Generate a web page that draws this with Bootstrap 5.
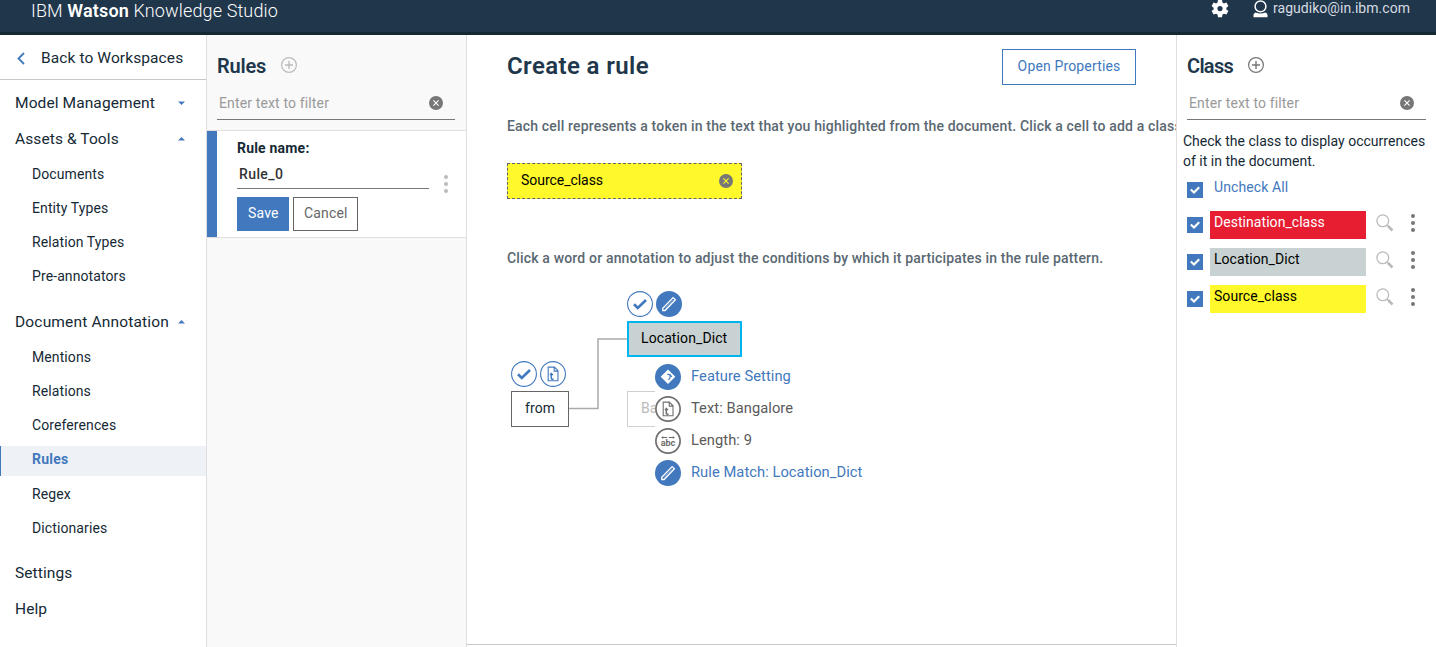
<!DOCTYPE html>
<html lang="en">
<head>
<meta charset="utf-8">
<title>IBM Watson Knowledge Studio</title>
<link href="https://cdn.jsdelivr.net/npm/bootstrap@5.3.0/dist/css/bootstrap.min.css" rel="stylesheet">
<style>
:root{--blue:#4178be;--ink:#152935;--navy:#20364b;--rule:#dfdfdf}
body{font-family:Roboto,"Liberation Sans",sans-serif;font-size:14px;line-height:20px;color:var(--ink);height:647px;overflow:hidden;letter-spacing:.1px}
svg{display:block;flex:none}
a{text-decoration:none;color:inherit}
.topbar{height:35px;background:var(--navy);border-bottom:3px solid #152935;padding:0 26px 0 31px}
.brand{font-size:18px;line-height:22px;font-weight:300;color:#fff;letter-spacing:.14px}
.brand b{font-weight:600}
.user{font-size:14px;line-height:17px;color:#d5dbe0;letter-spacing:.04px}
.shell{height:612px}
.side{width:207px;border-right:1px solid var(--rule)}
.back{height:45px;border-bottom:1px solid #c7c7c7;font-size:15.5px;padding:1px 0 0 17px;margin-bottom:5px}
.back svg{margin-top:2px}
.top-item{height:36px;font-size:15.5px;padding:0 21px 0 15px}
.group-gap{margin-bottom:11px}
.sub-item{height:34px;padding-left:32px}
.sub-item.on{height:30px;margin:4px 0 1px;background:#eef2f6;border-left:1px solid var(--blue);padding:0 0 4px 31px;color:var(--blue);font-weight:700;letter-spacing:.26px}
.rules{width:260px;background:#f9f9f9;border-right:1px solid var(--rule)}
.head{font-size:20px;line-height:24px;font-weight:600;color:var(--navy);letter-spacing:-.2px}
.head svg{margin-left:15px}
.head span{padding-top:1px;margin-bottom:-1px}
.classes .head{letter-spacing:-.7px}
.filter{border-bottom:1px solid #777;color:#999;height:33px;padding:0 12px 0 2px;margin-top:10px;letter-spacing:.14px}
.rulecard{height:108px;border-top:1px solid var(--rule);border-bottom:1px solid var(--rule);background:#fff;letter-spacing:.2px}
.bar{width:10px;background:var(--blue)}
.name-in{width:192px;border-bottom:1px solid #777;height:31px;padding:6px 0 0 2px;font-weight:500;color:#333;letter-spacing:.4px}
.sq{border-radius:0;font-size:14px;line-height:20px;letter-spacing:.15px;height:34px;padding:0 10px 2px}
.save{background:var(--blue);color:#fff;width:52px;border:1px solid var(--blue)}
.cancel{border:1px solid #666;color:#666;background:#fff;width:65px}
.main{width:709px;overflow:hidden}
.canvas-in{height:610px;border-bottom:1px solid #c7c7c7;padding-left:40px}
.open{width:134px;height:36px;border:1px solid var(--blue);color:var(--blue);background:#fff}
.title{font-size:24px;line-height:30px;font-weight:600;color:var(--navy);letter-spacing:.39px;padding-top:2px}
.hint{font-weight:500;color:#5a6872;white-space:nowrap;letter-spacing:.165px}
.token{width:235px;height:36px;background:#fff82a;border:1px dashed #666;color:#000;padding:0 8px 0 13px;letter-spacing:-.04px}
.token span{padding-bottom:2px}
.graph{height:230px;position:relative}
.graph>*{position:absolute}
.node{border:1px solid #666;height:36px;padding:0 13px 2px;display:flex;align-items:center;background:#fff;white-space:nowrap}
.node.sel{border:2px solid #00b4ef;background:#c8d2d2;color:#000}
.menu{background:#fff;width:240px;font-size:14.7px;letter-spacing:.06px}
.menu>div{height:32px;gap:10px;color:#5a5a5a}
.menu>div>span{padding-bottom:2px}
.menu>div.b{color:var(--blue)}
.classes{width:260px;border-left:1px solid var(--rule)}
.chip{width:156px;height:28px;padding:1px 4px;margin:0 10px 0 7px;color:#000;letter-spacing:.05px}
.crow{height:28px;margin-bottom:9px}
.tick{margin-top:6px}
.crow .tool{margin-top:3px}
.crow .more{color:#777;margin:3px 0 0 17px}
</style>
</head>
<body>
<svg width="0" height="0" class="position-absolute">
<defs>
<symbol id="clear" viewBox="0 0 14 14"><circle cx="7" cy="7" r="7" fill="#777"/><path d="M4.400 4.400l5.200 5.200M9.600 4.400l-5.200 5.200" stroke="var(--x,#fff)" stroke-width="1.100"/></symbol>
<symbol id="plus" viewBox="0 0 16 16"><circle cx="8" cy="8" r="7.400" fill="none" stroke="currentColor" stroke-width="1.200"/><path d="M8 4v8M4 8h8" stroke="currentColor" stroke-width="1.400"/></symbol>
<symbol id="dots" viewBox="0 0 4 18"><g fill="currentColor"><circle cx="2" cy="2" r="2"/><circle cx="2" cy="9" r="2"/><circle cx="2" cy="16" r="2"/></g></symbol>
<symbol id="check" viewBox="0 0 16 16"><path fill="#4178be" d="M0 0h16v16H0z"/><path d="M3.800 7.500l3.200 3L12.200 5.300" fill="none" stroke="#fff" stroke-width="2.200"/></symbol>
<symbol id="find" viewBox="0 0 18 18"><circle cx="6.800" cy="6.800" r="5.900" fill="none" stroke="#bbb" stroke-width="1.300"/><path d="M11 11l1.500 1.500" stroke="#bbb" stroke-width="1.300"/><path d="M12 12l4.500 4.500" stroke="#bbb" stroke-width="2.600"/></symbol>
<symbol id="ok" viewBox="0 0 26 26"><circle cx="13" cy="13" r="12.400" fill="#fff" stroke="#4178be" stroke-width="1.100"/><path d="M7 13.300l3.800 3.600 8.200-7.800" fill="none" stroke="#4178be" stroke-width="2.700"/></symbol>
<symbol id="ruler" viewBox="0 0 26 26"><circle cx="13" cy="13" r="13" fill="#4178be"/><path d="M6.800 17.300L17.100 6.600l2.300 2.200L9.100 19.500H6.800z" fill="none" stroke="#fff" stroke-width="1.300"/><path d="M9.200 17.300l7.800-8.100" stroke="#fff" stroke-width=".4"/></symbol>
<symbol id="doc" viewBox="0 0 26 26"><path d="M8.200 19.800V6.100h6.200l3.600 3.700v10z M14.200 6.300v3.800h3.600" fill="none" stroke="currentColor" stroke-width="1.100"/><path d="M11.300 11.800v5.400q0 1.300 2.300.9M9.800 13.600h3.400" fill="none" stroke="currentColor" stroke-width="1.500"/></symbol>
</defs>
</svg>

<header class="topbar d-flex justify-content-between align-items-start">
  <div class="brand">IBM <b>Watson</b> Knowledge Studio</div>
  <div class="d-flex user">
    <svg width="18" height="18" viewBox="0 0 18 18" class="me-4"><path fill="#fff" fill-rule="evenodd" d="M7 0h4l.5 2.600 1.400.8L15.400 2.500l2 3.500-2 1.700v1.700l2 1.700-2 3.500-2.500-.9-1.400.8L11 17.200H7l-.5-2.700-1.400-.8-2.500.9-2-3.500 2-1.700V7.700l-2-1.700 2-3.500 2.500.9 1.400-.8zM9 6a2.600 2.600 0 100 5.200A2.600 2.600 0 009 6z"/></svg>
    <svg width="15" height="18" viewBox="0 0 15 18" style="margin-right:5px"><circle cx="7.500" cy="6.400" r="5.400" fill="none" stroke="#fff" stroke-width="1.500"/><path fill="#fff" d="M.5 17.300v-2.200q0-1.800 2.100-2.500 4.900 2 9.800 0 2.100.7 2.100 2.500v2.200z"/></svg>
    <span>ragudiko@in.ibm.com</span>
  </div>
</header>

<div class="d-flex shell">
  <nav class="side flex-shrink-0">
    <a class="back d-flex align-items-center"><svg width="8" height="13" viewBox="0 0 8 13" class="me-3"><path d="M7 1L1.500 6.500 7 12" fill="none" stroke="#4178be" stroke-width="1.800"/></svg><span>Back to Workspaces</span></a>
    <a class="top-item d-flex align-items-center justify-content-between"><span>Model Management</span><svg width="7" height="4"><path d="M0 .5h7L3.500 4z" fill="#4178be"/></svg></a>
    <a class="top-item d-flex align-items-center justify-content-between"><span>Assets &amp; Tools</span><svg width="7" height="4"><path d="M0 3.500h7L3.500 0z" fill="#4178be"/></svg></a>
    <a class="sub-item d-flex align-items-center"><span>Documents</span></a>
    <a class="sub-item d-flex align-items-center"><span>Entity Types</span></a>
    <a class="sub-item d-flex align-items-center"><span>Relation Types</span></a>
    <a class="sub-item group-gap d-flex align-items-center"><span>Pre-annotators</span></a>
    <a class="top-item d-flex align-items-center justify-content-between"><span style="letter-spacing:.17px">Document Annotation</span><svg width="7" height="4"><path d="M0 3.500h7L3.500 0z" fill="#4178be"/></svg></a>
    <a class="sub-item d-flex align-items-center"><span>Mentions</span></a>
    <a class="sub-item d-flex align-items-center"><span>Relations</span></a>
    <a class="sub-item d-flex align-items-center"><span>Coreferences</span></a>
    <a class="sub-item on d-flex align-items-center"><span>Rules</span></a>
    <a class="sub-item d-flex align-items-center"><span>Regex</span></a>
    <a class="sub-item d-flex align-items-center" style="margin-bottom:10px"><span>Dictionaries</span></a>
    <a class="top-item d-flex align-items-center"><span>Settings</span></a>
    <a class="top-item d-flex align-items-center"><span>Help</span></a>
  </nav>

  <section class="rules flex-shrink-0">
    <div style="padding:18px 11px 10px 10px">
      <div class="d-flex align-items-center head"><span>Rules</span><svg width="16" height="16" style="color:#bbb"><use href="#plus"/></svg></div>
      <div class="filter d-flex align-items-center justify-content-between"><span>Enter text to filter</span><svg width="14" height="14"><use href="#clear"/></svg></div>
    </div>
    <div class="rulecard d-flex">
      <div class="bar"></div>
      <div style="padding:7px 0 0 20px">
        <div class="fw-bold"><span>Rule name:</span></div>
        <div class="name-in"><span>Rule_0</span></div>
        <div class="d-flex gap-1 mt-2"><button class="btn sq save">Save</button><button class="btn sq cancel">Cancel</button></div>
      </div>
      <svg width="4" height="18" class="align-self-center" style="color:#bbb;margin-left:15px"><use href="#dots"/></svg>
    </div>
  </section>

  <main class="main flex-shrink-0">
    <div class="canvas-in">
      <div class="d-flex justify-content-between" style="padding:14px 40px 0 0">
        <div class="title"><span>Create a rule</span></div>
        <button class="btn sq open">Open Properties</button>
      </div>
      <div class="hint" style="margin-top:31px">Each cell represents a token in the text that you highlighted from the document. Click a cell to add a class</div>
      <div class="token d-flex align-items-center justify-content-between" style="margin-top:27px"><span>Source_class</span><svg width="14" height="14" style="--x:#fff82a"><use href="#clear"/></svg></div>
      <div class="hint" style="margin-top:49px">Click a word or annotation to adjust the conditions by which it participates in the rule pattern.</div>
      <div class="graph">
        <svg width="60" height="72" style="left:61px;top:70px"><path d="M0 70.500h30V1h30" fill="none" stroke="#aaa" stroke-width="1.500"/></svg>
        <svg width="26" height="26" style="left:4px;top:93px"><use href="#ok"/></svg>
        <svg width="26" height="26" viewBox="0 0 26 26" style="left:33px;top:93px;color:#4178be"><circle cx="13" cy="13" r="12.400" fill="#fff" stroke="currentColor" stroke-width="1.100"/><use href="#doc"/></svg>
        <div class="node" style="left:4px;top:123px;width:58px"><span>from</span></div>
        <svg width="26" height="26" style="left:120px;top:23px"><use href="#ok"/></svg>
        <svg width="26" height="26" style="left:149px;top:23px"><use href="#ruler"/></svg>
        <div class="node sel" style="left:120px;top:53px;width:115px;padding-left:12px"><span>Location_Dict</span></div>
        <div class="node border-end-0 overflow-hidden" style="left:120px;top:123px;width:30px;padding-right:0;border-color:#d0d0d0;color:#bbb"><span>Ba</span></div>
        <div class="menu" style="left:148px;top:93px">
          <div class="d-flex align-items-center b"><svg width="26" height="26" viewBox="0 0 26 26"><circle cx="13" cy="13" r="13" fill="#4178be"/><path fill="#fff" d="M13 5.500l7.300 7.300-7.300 7.300-7.300-7.300z"/><path d="M13.400 15.800q2.300-1.800 1.600-5M12.300 10.400l2.700.2 1.800 2.300" fill="none" stroke="#4178be" stroke-width="1.100"/></svg><span>Feature Setting</span></div>
          <div class="d-flex align-items-center"><svg width="26" height="26" viewBox="0 0 26 26" style="color:#6e6e6e"><circle cx="13" cy="13" r="12.100" fill="#fff" stroke="currentColor" stroke-width="1.700"/><use href="#doc"/></svg><span>Text: Bangalore</span></div>
          <div class="d-flex align-items-center"><svg width="26" height="26" viewBox="0 0 26 26"><circle cx="13" cy="13" r="12.100" fill="#fff" stroke="#6e6e6e" stroke-width="1.700"/><path d="M7.500 9.500h4.700M13.800 9.500h4.700" stroke="#6e6e6e" stroke-width="1"/><path d="M6.200 9.500l2-1.500v3zM19.800 9.500l-2-1.500v3z" fill="#6e6e6e"/><text x="13" y="18.400" text-anchor="middle" font-size="9" font-weight="700" letter-spacing="0" fill="#6e6e6e">abc</text></svg><span>Length: 9</span></div>
          <div class="d-flex align-items-center b"><svg width="26" height="26"><use href="#ruler"/></svg><span>Rule Match: Location_Dict</span></div>
        </div>
      </div>
    </div>
  </main>

  <aside class="classes flex-shrink-0">
    <div style="padding:18px 10px 0 10px">
      <div class="d-flex align-items-center head"><span>Class</span><svg width="16" height="16" style="color:#777"><use href="#plus"/></svg></div>
      <div class="filter d-flex align-items-center justify-content-between"><span>Enter text to filter</span><svg width="14" height="14"><use href="#clear"/></svg></div>
    </div>
    <div class="text-nowrap" style="padding:11px 0 0 6px;letter-spacing:.01px"><span>Check the class to display occurrences</span><br><span>of it in the document.</span></div>
    <div style="padding:6px 0 0 10px">
      <div class="d-flex" style="height:34px"><svg width="16" height="16" style="margin:5px 11px 0 0"><use href="#check"/></svg><span style="color:var(--blue)">Uncheck All</span></div>
      <div class="crow d-flex align-items-start"><svg width="16" height="16" class="tick"><use href="#check"/></svg><div class="chip" style="background:#e71d32;color:#fff">Destination_class</div><svg width="18" height="18" class="tool"><use href="#find"/></svg><svg width="4" height="18" class="more"><use href="#dots"/></svg></div>
      <div class="crow d-flex align-items-start"><svg width="16" height="16" class="tick"><use href="#check"/></svg><div class="chip" style="background:#c8d2d2">Location_Dict</div><svg width="18" height="18" class="tool"><use href="#find"/></svg><svg width="4" height="18" class="more"><use href="#dots"/></svg></div>
      <div class="crow d-flex align-items-start"><svg width="16" height="16" class="tick"><use href="#check"/></svg><div class="chip" style="background:#fff82a">Source_class</div><svg width="18" height="18" class="tool"><use href="#find"/></svg><svg width="4" height="18" class="more"><use href="#dots"/></svg></div>
    </div>
  </aside>
</div>
<script src="https://cdn.jsdelivr.net/npm/bootstrap@5.3.0/dist/js/bootstrap.bundle.min.js"></script>
</body>
</html>
